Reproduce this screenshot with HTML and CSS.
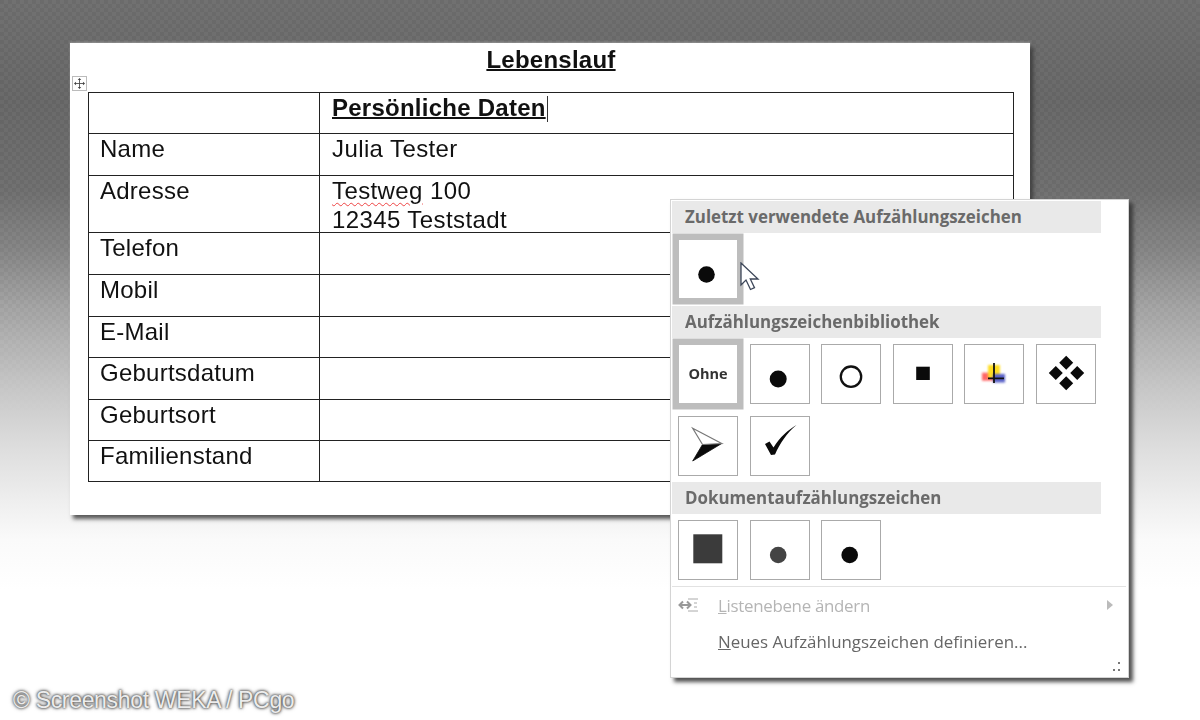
FILE: index.html
```html
<!DOCTYPE html>
<html lang="de">
<head>
<meta charset="utf-8">
<title>Lebenslauf</title>
<link rel="stylesheet" href="styles.css">
</head>
<body>
<main class="stage">
  <section class="doc">
    <h1 class="doc-title">Lebenslauf</h1>
    <div class="move-handle">
      <svg width="13" height="13" viewBox="0 0 13 13"><path d="M6.500 1v11M1 6.500h11" stroke="#444" fill="none"/><path d="M6.500 0l2 2.400h-4zM6.500 13l2-2.400h-4zM0 6.500l2.400-2v4zM13 6.500l-2.400-2v4z" fill="#444"/></svg>
    </div>
    <table class="cv">
      <tr class="r41"><td class="c1"></td><td class="c2"><strong class="heading">Persönliche Daten</strong><span class="caret"></span></td></tr>
      <tr class="r42"><td class="c1">Name</td><td class="c2">Julia Tester</td></tr>
      <tr class="r57"><td class="c1">Adresse</td><td class="c2"><div class="addr"><span class="spell">Testweg</span> 100<br>12345 Teststadt</div></td></tr>
      <tr class="r42"><td class="c1">Telefon</td><td class="c2"></td></tr>
      <tr class="r42"><td class="c1">Mobil</td><td class="c2"></td></tr>
      <tr class="r41"><td class="c1">E-Mail</td><td class="c2"></td></tr>
      <tr class="r42"><td class="c1">Geburtsdatum</td><td class="c2"></td></tr>
      <tr class="r41"><td class="c1">Geburtsort</td><td class="c2"></td></tr>
      <tr class="r41"><td class="c1">Familienstand</td><td class="c2"></td></tr>
    </table>
  </section>

  <aside class="menu">
    <h2 class="menu-head">Zuletzt verwendete Aufzählungszeichen</h2>
    <div class="swatches recent">
      <div class="swatch selected">
        <svg viewBox="0 0 58 58"><circle cx="27.500" cy="34.500" r="8.300"/></svg>
      </div>
    </div>
    <h2 class="menu-head">Aufzählungszeichenbibliothek</h2>
    <div class="swatches library">
      <div class="swatch selected"><span class="none">Ohne</span></div>
      <div class="swatch"><svg viewBox="0 0 58 58"><circle cx="27.200" cy="34" r="8.500"/></svg></div>
      <div class="swatch"><svg viewBox="0 0 58 58"><circle cx="29" cy="31.700" r="10.200" fill="none" stroke="#111" stroke-width="2.300"/></svg></div>
      <div class="swatch"><svg viewBox="0 0 58 58"><rect x="22.200" y="21.700" width="13.600" height="13.300"/></svg></div>
      <div class="swatch"><svg viewBox="0 0 58 58"><g class="soft"><rect x="17" y="27.700" width="11" height="8" fill="#f66"/><rect x="23" y="20" width="12" height="13" fill="#fd2"/><rect x="28" y="29" width="12" height="8.500" fill="#5a62c8"/></g><path d="M29 18v20M23 33.300h16" stroke="#111" stroke-width="1.800" fill="none"/></svg></div>
      <div class="swatch"><svg viewBox="0 0 58 58"><path d="M29.200 10.700l7 7-7 7-7-7zM18.800 21l7 7-7 7-7-7zM40.200 21l7 7-7 7-7-7zM29.200 31.300l7 7-7 7-7-7z"/></svg></div>
      <div class="swatch"><svg viewBox="0 0 58 58"><path d="M13.700 44L42.700 26.500 23.500 27.500z" fill="#0a0a0a" stroke="#0a0a0a" stroke-width=".8"/><path d="M13.700 11.300L42.700 26.500 23.500 27.500z" fill="#fff" stroke="#777" stroke-width="1.200"/></svg></div>
      <div class="swatch"><svg viewBox="0 0 58 58"><path d="M14 27L18.500 24.500 22.500 30.500C29 20 37 13 45.500 8 36 16 29 26 24 37.500L20 38z"/></svg></div>
    </div>
    <h2 class="menu-head">Dokumentaufzählungszeichen</h2>
    <div class="swatches doc-set">
      <div class="swatch"><svg viewBox="0 0 58 58"><rect x="14.300" y="13.300" width="29" height="29" fill="#3b3b3b"/></svg></div>
      <div class="swatch"><svg viewBox="0 0 58 58"><circle cx="27.200" cy="34" r="8.300" fill="#444"/></svg></div>
      <div class="swatch"><svg viewBox="0 0 58 58"><circle cx="27.700" cy="34" r="8.300"/></svg></div>
    </div>
    <hr class="menu-rule">
    <div class="menu-item disabled">
      <svg class="item-icon" width="24" height="16" viewBox="0 0 24 16"><path d="M1 8h12M5 4.500L1.500 8 5 11.500M9 4.500L12.500 8 9 11.500" stroke="#999" stroke-width="2" fill="none"/><path d="M10 2h10M16 6h3M16 10h3M10 14h10" stroke="#aaa" fill="none"/></svg>
      <span class="item-label"><u>L</u>istenebene ändern</span>
      <span class="arrow"></span>
    </div>
    <div class="menu-item">
      <span class="item-icon"></span>
      <span class="item-label"><u>N</u>eues Aufzählungszeichen definieren...</span>
    </div>
    <svg class="grip" width="9" height="10" viewBox="0 0 9 10"><path d="M6 0h2v2H6zM1 7h2v2H1zM6 7h2v2H6z" fill="#777"/></svg>
    <svg class="cursor" width="20" height="30" viewBox="0 0 20 30"><path d="M1 1v22l5-5 4.500 9.500 4-1.800-4.200-8.700H18z" fill="#fff" stroke="#3c4658" stroke-width="1.300"/></svg>
  </aside>

  <p class="credit">© Screenshot WEKA / PCgo</p>
</main>
</body>
</html>
```
FILE: styles.css
```css
* { box-sizing: border-box; }
html, body { margin: 0; height: 100%; }
body { overflow: hidden; }
.stage {
  position: relative;
  width: 1200px;
  height: 720px;
  padding: 43px 0 0 70px;
  background: linear-gradient(#6e6e6e 0, #676767 100px, #6e6e6e 190px, #858585 250px, #a5a5a5 310px, #c6c6c6 385px, #dedede 450px, #eeeeee 500px, #fafafa 540px, #fff 590px);
  font-family: "Liberation Sans", Arial, sans-serif;
  overflow: hidden;
}
.stage::before {
  content: "";
  position: absolute;
  inset: 0;
  background: repeating-conic-gradient(rgba(255,255,255,.025) 0 25%, rgba(0,0,0,.025) 0 50%) 0 0 / 8px 8px;
  -webkit-mask-image: linear-gradient(#000 0, #000 300px, transparent 420px);
  mask-image: linear-gradient(#000 0, #000 300px, transparent 420px);
}
.doc {
  position: relative;
  width: 960px;
  height: 472px;
  padding: 0 16px 0 18px;
  background: #fff;
  box-shadow: 3px 4px 4px rgba(50,50,50,.8), 0 -1px 2px rgba(255,255,255,.3);
  color: #111;
  filter: blur(.35px);
}
.doc-title {
  margin: 0;
  height: 49px;
  padding-top: 1px;
  text-align: center;
  font-size: 24px;
  line-height: 32px;
  font-weight: 700;
  letter-spacing: .25px;
  text-decoration: underline;
  text-decoration-thickness: 2px;
}
.move-handle {
  position: absolute;
  left: 2px;
  top: 33px;
  width: 15px;
  height: 15px;
  border: 1px solid #bbb;
  background: #fff;
  display: flex;
  align-items: center;
  justify-content: center;
}
.move-handle svg { width: 11px; height: 11px; }
.cv {
  width: 926px;
  border-collapse: collapse;
  table-layout: fixed;
  font-size: 24px;
  line-height: 28px;
}
.cv td {
  border: 1px solid #222;
  padding: 1px 0 0 12px;
  vertical-align: top;
}
.cv .c1 { width: 231px; padding-left: 11px; letter-spacing: .25px; }
.c2 { letter-spacing: .4px; }
.r41 { height: 41px; }
.r42 { height: 42px; }
.r57 { height: 57px; }
.addr { height: 54px; line-height: 28.500px; }
.heading {
  letter-spacing: .25px;
  text-decoration: underline;
  text-decoration-thickness: 2px;
}
.caret {
  display: inline-block;
  width: 1px;
  height: 26px;
  margin-left: 1px;
  vertical-align: -6px;
  background: #333;
}
.spell {
  text-decoration: underline wavy #e44 1px;
  text-underline-offset: 3px;
}
.menu {
  position: absolute;
  left: 670px;
  top: 199px;
  width: 459px;
  height: 479px;
  padding: 1px 27px 0 1px;
  background: #fff;
  border: 1px solid #d4d4d4;
  box-shadow: 4px 4px 4px rgba(50,50,50,.85);
  font-family: "Open Sans", "Noto Sans", sans-serif;
  filter: blur(.35px);
}
.menu-head {
  margin: 0;
  height: 32px;
  padding-left: 13px;
  background: #e9e9e9;
  color: #6a6a6a;
  font-size: 16.900px;
  line-height: 32px;
  font-weight: 700;
}
.swatches {
  display: flex;
  flex-wrap: wrap;
  align-content: flex-start;
  gap: 12px 11.500px;
  padding: 6px 0 0 6px;
}
.recent { height: 73px; }
.library { height: 144px; }
.doc-set { height: 72px; }
.swatch {
  width: 60px;
  height: 60px;
  border: 1px solid #aaa;
  background: #fff;
  display: flex;
  align-items: center;
  justify-content: center;
  flex: none;
}
.swatch svg { display: block; width: 58px; height: 58px; fill: #0a0a0a; overflow: visible; }
.swatch.selected { border-color: #bdbdbd; box-shadow: 0 0 0 5.500px #bdbdbd; }
.soft { filter: blur(.8px); }
.none {
  font-size: 14.500px;
  font-weight: 700;
  color: #333;
  margin-top: -1px;
}
.menu-rule {
  margin: 0 -25px 0 0;
  border: 0;
  border-top: 1px solid #e2e2e2;
}
.menu-item {
  display: flex;
  align-items: center;
  height: 36px;
  color: #666;
  font-size: 16.900px;
  padding-left: 6px;
  margin-right: -25px;
}
.menu-item.disabled { color: #b5b5b5; letter-spacing: -.3px; }
.item-icon { width: 24px; flex: none; margin-right: 16px; }
.item-label { flex: 1; }
.arrow {
  width: 0;
  height: 0;
  margin-right: 13px;
  border-left: 6px solid #bbb;
  border-top: 5px solid transparent;
  border-bottom: 5px solid transparent;
}
.grip { position: absolute; right: 7px; bottom: 5px; }
.cursor { position: absolute; left: 69px; top: 62px; }
.credit {
  position: absolute;
  left: 13px;
  top: 687px;
  margin: 0;
  font-size: 23px;
  line-height: 26px;
  letter-spacing: -.33px;
  color: #ececec;
  text-shadow: 0 0 2px #555, 0 0 3px #555, 0 0 4px #777;
}
```
